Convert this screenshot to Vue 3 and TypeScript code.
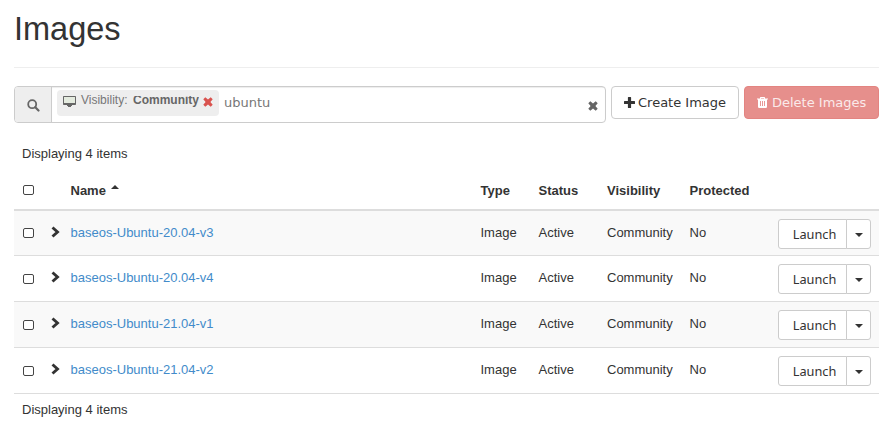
<script setup lang="ts">
interface ImageRow {
  name: string
  type: string
  status: string
  visibility: string
  isProtected: string
}

const images: ImageRow[] = ['20.04-v3', '20.04-v4', '21.04-v1', '21.04-v2'].map((version) => ({
  name: `baseos-Ubuntu-${version}`,
  type: 'Image',
  status: 'Active',
  visibility: 'Community',
  isProtected: 'No',
}))
</script>

<template>
  <main class="page">
    <h1>Images</h1>
    <div class="toolbar">
      <div class="search">
        <span class="addon">
          <svg width="13" height="13" viewBox="0 0 13 13"><circle cx="5.2" cy="5.2" r="4" fill="none" stroke="#666" stroke-width="1.8" /><path d="M8.3 8.3 11.5 11.5" stroke="#666" stroke-width="2.200" stroke-linecap="round" /></svg>
        </span>
        <div class="field">
          <span class="chip">
            <svg class="monitor" width="13" height="11" viewBox="0 0 13 11"><path fill="#666" fill-rule="evenodd" d="M.8 0h11.4q.8 0 .8.8v7.400q0 .8-.8.8H9v1H8v1H5v-1H4V9H.8Q0 9 0 8.200V.8Q0 0 .8 0zM1 1v6h11V1z" /><path d="M1 1h11v6H1z" fill="#e4ebdf" /></svg>
            <span class="facet">Visibility:</span>
            <b class="value">Community</b>
            <svg class="remove" width="10" height="10" viewBox="0 0 10 10"><path fill="#d9534f" d="M2.300.3 5 2.600 7.700.3l2 2L7.400 5l2.300 2.700-2 2L5 7.400 2.300 9.700l-2-2L2.600 5 .3 2.300z" /></svg>
          </span>
          <span class="query">ubuntu</span>
          <svg class="clear" width="10" height="10" viewBox="0 0 10 10"><path fill="#666" d="M2.300.3 5 2.600 7.700.3l2 2L7.400 5l2.300 2.700-2 2L5 7.400 2.300 9.700l-2-2L2.600 5 .3 2.300z" /></svg>
        </div>
      </div>
      <button class="btn create">
        <svg width="11" height="11" viewBox="0 0 11 11"><path d="M4.500 0h2a.6.6 0 0 1 .6.6v3.300h3.300a.6.6 0 0 1 .6.6v2a.6.6 0 0 1-.6.6H7.100v3.300a.6.6 0 0 1-.6.6h-2a.6.6 0 0 1-.6-.6V7.100H.6a.6.6 0 0 1-.6-.6v-2a.6.6 0 0 1 .6-.6h3.300V.6a.6.6 0 0 1 .6-.6z" fill="#333" /></svg>
        <span>Create Image</span>
      </button>
      <button class="btn delete">
        <svg width="11" height="11" viewBox="0 0 11 11"><path fill="#fff" fill-rule="evenodd" d="M3 1.500V.7Q3 0 3.700 0h3.600Q8 0 8 .7v.8h3v1H10v7.300Q10 11 8.800 11H2.200Q1 11 1 9.800V2.500H0v-1zM4 1v.5h3V1zM3 4v5h.9V4zm2.050 0v5h.9V4zM7.100 4v5H8V4z" /></svg>
        <span>Delete Images</span>
      </button>
    </div>

    <p class="count">Displaying 4 items</p>
    <div class="table">
      <div class="row head">
        <i class="check"></i><span></span>
        <span class="sort">Name <i class="up"></i></span>
        <span>Type</span><span>Status</span><span>Visibility</span><span>Protected</span>
      </div>
      <div v-for="image in images" :key="image.name" class="row item">
        <i class="check"></i>
        <svg class="chevron" width="9" height="12" viewBox="0 0 9 12"><path d="M1.500 1.500 6.500 6l-5 4.500" fill="none" stroke="#333" stroke-width="2.900" /></svg>
        <a class="name">{{ image.name }}</a>
        <span>{{ image.type }}</span>
        <span>{{ image.status }}</span>
        <span>{{ image.visibility }}</span>
        <span>{{ image.isProtected }}</span>
        <div class="actions">
          <button class="launch">Launch</button>
          <button class="toggle"><i class="down"></i></button>
        </div>
      </div>
    </div>
    <p class="count bottom">Displaying 4 items</p>
  </main>
</template>

<style>
body {
  background: #fff;
  overflow: hidden;
}
</style>

<style scoped>
* {
  box-sizing: border-box;
}
svg {
  display: block;
  flex: none;
}
.page {
  width: 886px;
  height: 443px;
  padding: 0 7px 0 14px;
  color: #333;
  font: 13px/18px "Liberation Sans", Arial, sans-serif;
}
h1 {
  height: 68px;
  margin: 0;
  padding-top: 11px;
  border-bottom: 1px solid #eee;
  font-size: 32.5px;
  line-height: 36px;
  font-weight: 400;
}
.toolbar {
  display: flex;
  align-items: flex-start;
  padding-top: 18px;
}
.search {
  display: flex;
  width: 592px;
  height: 37px;
  border: 1px solid #ccc;
  border-radius: 4px;
  overflow: hidden;
}
.addon {
  width: 37px;
  padding: 12px 0 0 12px;
  background: #eee;
  border-right: 1px solid #ccc;
}
.field {
  display: flex;
  flex: 1;
  align-items: flex-start;
  padding: 3px 7px 0 5px;
  box-shadow: inset 0 1px 1px rgba(0, 0, 0, 0.075);
  color: #777;
}
.chip {
  display: flex;
  align-items: flex-start;
  width: 162px;
  height: 26px;
  padding-left: 6px;
  border-radius: 4px;
  background: #eee;
  font-size: 12px;
  line-height: 14px;
}
.monitor {
  margin-top: 6px;
}
.facet {
  width: 57px;
  padding: 3px 0 0 5px;
  white-space: nowrap;
}
.value {
  width: 66px;
  margin-top: 3px;
  color: #666;
  clip-path: inset(3px 0 0 0);
}
.remove {
  margin: 7px 0 0 4px;
}
.query {
  margin: 4px 0 0 5px;
  font: 13px/18px "DejaVu Sans", sans-serif;
}
.clear {
  margin: 11px 0 0 auto;
}
button {
  margin: 0;
  background: #fff;
  border: 1px solid #ccc;
  color: #333;
}
.btn {
  display: flex;
  align-items: center;
  height: 33px;
  margin-left: 5px;
  padding: 0 12px;
  border-radius: 4px;
  font: 13px/18px "DejaVu Sans", sans-serif;
  white-space: nowrap;
}
.btn span {
  margin-left: 3px;
}
.create {
  width: 128px;
}
.delete {
  width: 135px;
  background: #e68f8c;
  border-color: #e38481;
  color: #faeaea;
}
.delete span {
  margin-left: 4px;
}
.count {
  height: 18px;
  margin: 22px 0 0 8px;
}
.table {
  padding-top: 8px;
}
.row {
  display: grid;
  grid-template-columns: 28px 20.5px 410px 58px 68.5px 82.5px 88.500px 93px;
  padding-left: 8px;
}
.head {
  height: 40px;
  padding-top: 11px;
  border-bottom: 2px solid #ddd;
  font-weight: 700;
}
.check {
  width: 11px;
  height: 10px;
  margin: 3px 0 0 1px;
  border: 1px solid #444;
  border-radius: 2px;
  background: #fff;
}
.sort {
  display: flex;
}
.up {
  width: 0;
  height: 0;
  margin: 3px 0 0 5px;
  border: 4px solid transparent;
  border-top: 0;
  border-bottom-color: #333;
}
.item {
  height: 46px;
  padding-top: 13px;
  border-bottom: 1px solid #ddd;
}
.item:nth-child(2) {
  height: 45px;
}
.item:nth-child(even) {
  background: #f9f9f9;
}
.item .check {
  margin-top: 5px;
}
.item:nth-child(2) .check {
  margin-top: 4px;
}
.chevron {
  margin: 2px 0 0 1px;
}
.name {
  color: #428bca;
}
.actions {
  display: flex;
  width: 93px;
  height: 30px;
  margin-top: -5px;
}
.launch {
  width: 69px;
  padding: 0 0 0 4px;
  border-radius: 3px 0 0 3px;
  font: 12.75px/18px "Noto Sans", sans-serif;
}
.toggle {
  display: flex;
  justify-content: center;
  align-items: center;
  width: 25px;
  margin-left: -1px;
  padding: 2px 0 0;
  border-radius: 0 3px 3px 0;
}
.down {
  border: 4px solid transparent;
  border-top-color: #333;
  border-bottom: 0;
}
.bottom {
  margin-top: 7px;
}
</style>
